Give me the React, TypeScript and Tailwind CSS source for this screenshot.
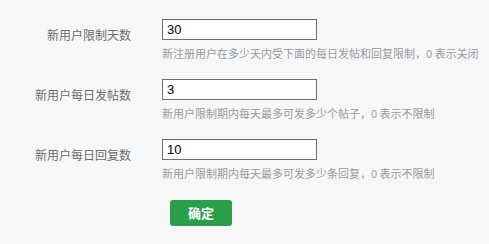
const fields = [
  { label: "新用户限制天数", value: "30", help: "新注册用户在多少天内受下面的每日发帖和回复限制，0 表示关闭" },
  { label: "新用户每日发帖数", value: "3", help: "新用户限制期内每天最多可发多少个帖子，0 表示不限制" },
  { label: "新用户每日回复数", value: "10", help: "新用户限制期内每天最多可发多少条回复，0 表示不限制" },
];

const cjk = { fontFamily: '"Noto Sans CJK SC", "Noto Sans", sans-serif' };

export default function App() {
  return (
    <div className="w-[489px] h-[244px] bg-[#f6f7f9] pt-[19px]" style={cjk}>
      <div className="flex flex-col gap-[18px]">
        {fields.map((f) => (
          <div key={f.label} className="flex">
            <div className="w-[131px] pt-[5px] text-right text-[12px] leading-[21px] text-[#6b6b6b]">
              {f.label}
            </div>
            <div className="ml-[31px] flex flex-col">
              <input
                defaultValue={f.value}
                className="w-[155px] h-[21px] border border-[#6f6f6f] bg-white px-[4px] text-[13px] text-black outline-none"
                style={{ fontFamily: '"Liberation Sans", Arial, sans-serif' }}
              />
              <div className="mt-[5px] text-[11px] leading-[16px] text-[#9a9a9a] whitespace-nowrap">
                {f.help}
              </div>
            </div>
          </div>
        ))}
      </div>
      <div className="ml-[170px] mt-[18px]">
        <button className="w-[62px] h-[26px] rounded-[3px] bg-[#2a9f4a] text-white text-[13px] font-bold">
          确定
        </button>
      </div>
    </div>
  );
}
